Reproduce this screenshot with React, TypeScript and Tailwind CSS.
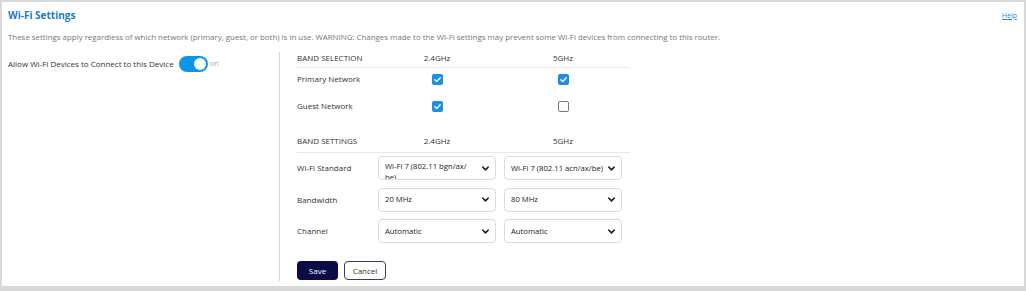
import React from "react";

const F = { fontFamily: '"Open Sans", "Noto Sans", sans-serif' };

function Check({ on }: { on: boolean }) {
  return on ? (
    <div className="w-[11px] h-[11px] rounded-[2px] bg-[#1b8fe3] flex items-center justify-center">
      <svg width="9" height="9" viewBox="0 0 10 10">
        <path d="M2 5.2 L4.2 7.2 L8 3" stroke="white" strokeWidth="1.5" fill="none" strokeLinecap="round" strokeLinejoin="round" />
      </svg>
    </div>
  ) : (
    <div className="w-[11px] h-[11px] rounded-[2px] border border-[#777] bg-white" />
  );
}

function Sel({ text, wrap }: { text: string; wrap?: boolean }) {
  return (
    <div className="h-[24px] border border-[#dcdcdc] rounded-[4px] bg-white flex items-center pl-[6px] pr-[5px] overflow-hidden">
      <div className="flex-1 min-w-0">
        <div className={`text-[7.7px] text-[#222] leading-[11px] ${wrap ? "w-[86px] h-[22px] pt-[4px] overflow-hidden" : "whitespace-nowrap"}`}>{text}</div>
      </div>
      <svg width="9" height="9" viewBox="0 0 10 10" className="shrink-0">
        <path d="M2 3.5 L5 6.5 L8 3.5" stroke="#222" strokeWidth="1.7" fill="none" strokeLinecap="round" strokeLinejoin="round" />
      </svg>
    </div>
  );
}

export default function App() {
  return (
    <div style={F} className="w-[1026px] h-[291px] bg-[#d9d9d9] pt-[2px] px-[2px] pb-[5px]">
      <div className="h-full bg-white px-[6px] flex flex-col">
        <div className="flex items-start justify-between pt-[6px]">
          <div className="text-[10px] font-bold text-[#1a7cc4] leading-[14px]">Wi-Fi Settings</div>
          <div className="text-[7px] text-[#2a8bd8] underline mt-[3px] mr-[1px] leading-[10px]">Help</div>
        </div>
        <div className="text-[7.9px] text-[#777] mt-[9px] leading-[12px]">
          These settings apply regardless of which network (primary, guest, or both) is in use. WARNING: Changes made to the Wi-Fi settings may prevent some Wi-Fi devices from connecting to this router.
        </div>
        <div className="flex mt-[9px] flex-1 pb-[5px]">
          <div className="w-[271px] pt-[4px]">
            <div className="flex items-center h-[16px]">
              <span className="text-[8px] text-[#333]">Allow Wi-Fi Devices to Connect to this Device</span>
              <div className="ml-[5px] w-[29px] h-[16px] rounded-full bg-[#0d95e8] flex items-center justify-end pr-[2px]">
                <div className="w-[12px] h-[12px] rounded-full bg-white" />
              </div>
              <span className="ml-[2px] text-[7.5px] text-[#aaa]">on</span>
            </div>
          </div>
          <div className="border-l border-[#d6d6d6] pl-[17px] w-[352px]">
            <div className="grid grid-cols-[73px_118px_118px] gap-x-[8px] text-[8px] text-[#333] pt-[1px]">
              <div className="h-[10px] leading-[10px]">BAND SELECTION</div>
              <div className="h-[10px] leading-[10px] text-center">2.4GHz</div>
              <div className="h-[10px] leading-[10px] text-center">5GHz</div>
            </div>
            <div className="border-t border-[#e8e8e8] mt-[4px] w-[333px]" />
            <div className="grid grid-cols-[73px_118px_118px] gap-x-[8px] text-[8px] text-[#333] items-center">
              <div className="h-[22px] flex items-center">Primary Network</div>
              <div className="flex justify-center"><Check on /></div>
              <div className="flex justify-center"><Check on /></div>
              <div className="h-[32px] flex items-center">Guest Network</div>
              <div className="flex justify-center"><Check on /></div>
              <div className="flex justify-center"><Check on={false} /></div>
            </div>
            <div className="grid grid-cols-[73px_118px_118px] gap-x-[8px] text-[8px] text-[#333] mt-[14px]">
              <div className="h-[10px] leading-[10px]">BAND SETTINGS</div>
              <div className="h-[10px] leading-[10px] text-center">2.4GHz</div>
              <div className="h-[10px] leading-[10px] text-center">5GHz</div>
            </div>
            <div className="border-t border-[#e8e8e8] mt-[6px] w-[333px]" />
            <div className="grid grid-cols-[73px_118px_118px] gap-x-[8px] gap-y-[7.5px] text-[8px] text-[#333] items-center mt-[3px]">
              <div>Wi-Fi Standard</div>
              <Sel text={"Wi-Fi 7 (802.11 bgn/ax/\u200Bbe)"} wrap />
              <Sel text="Wi-Fi 7 (802.11 acn/ax/be)" />
              <div>Bandwidth</div>
              <Sel text="20 MHz" />
              <Sel text="80 MHz" />
              <div>Channel</div>
              <Sel text="Automatic" />
              <Sel text="Automatic" />
            </div>
            <div className="flex gap-[6px] mt-[18px]">
              <button className="w-[41px] h-[19px] rounded-[4px] bg-[#0b0b45] text-white text-[8px]">Save</button>
              <button className="w-[42px] h-[19px] rounded-[4px] border border-[#3a3a5a] bg-white text-[#333] text-[8px]">Cancel</button>
            </div>
          </div>
        </div>
      </div>
    </div>
  );
}
